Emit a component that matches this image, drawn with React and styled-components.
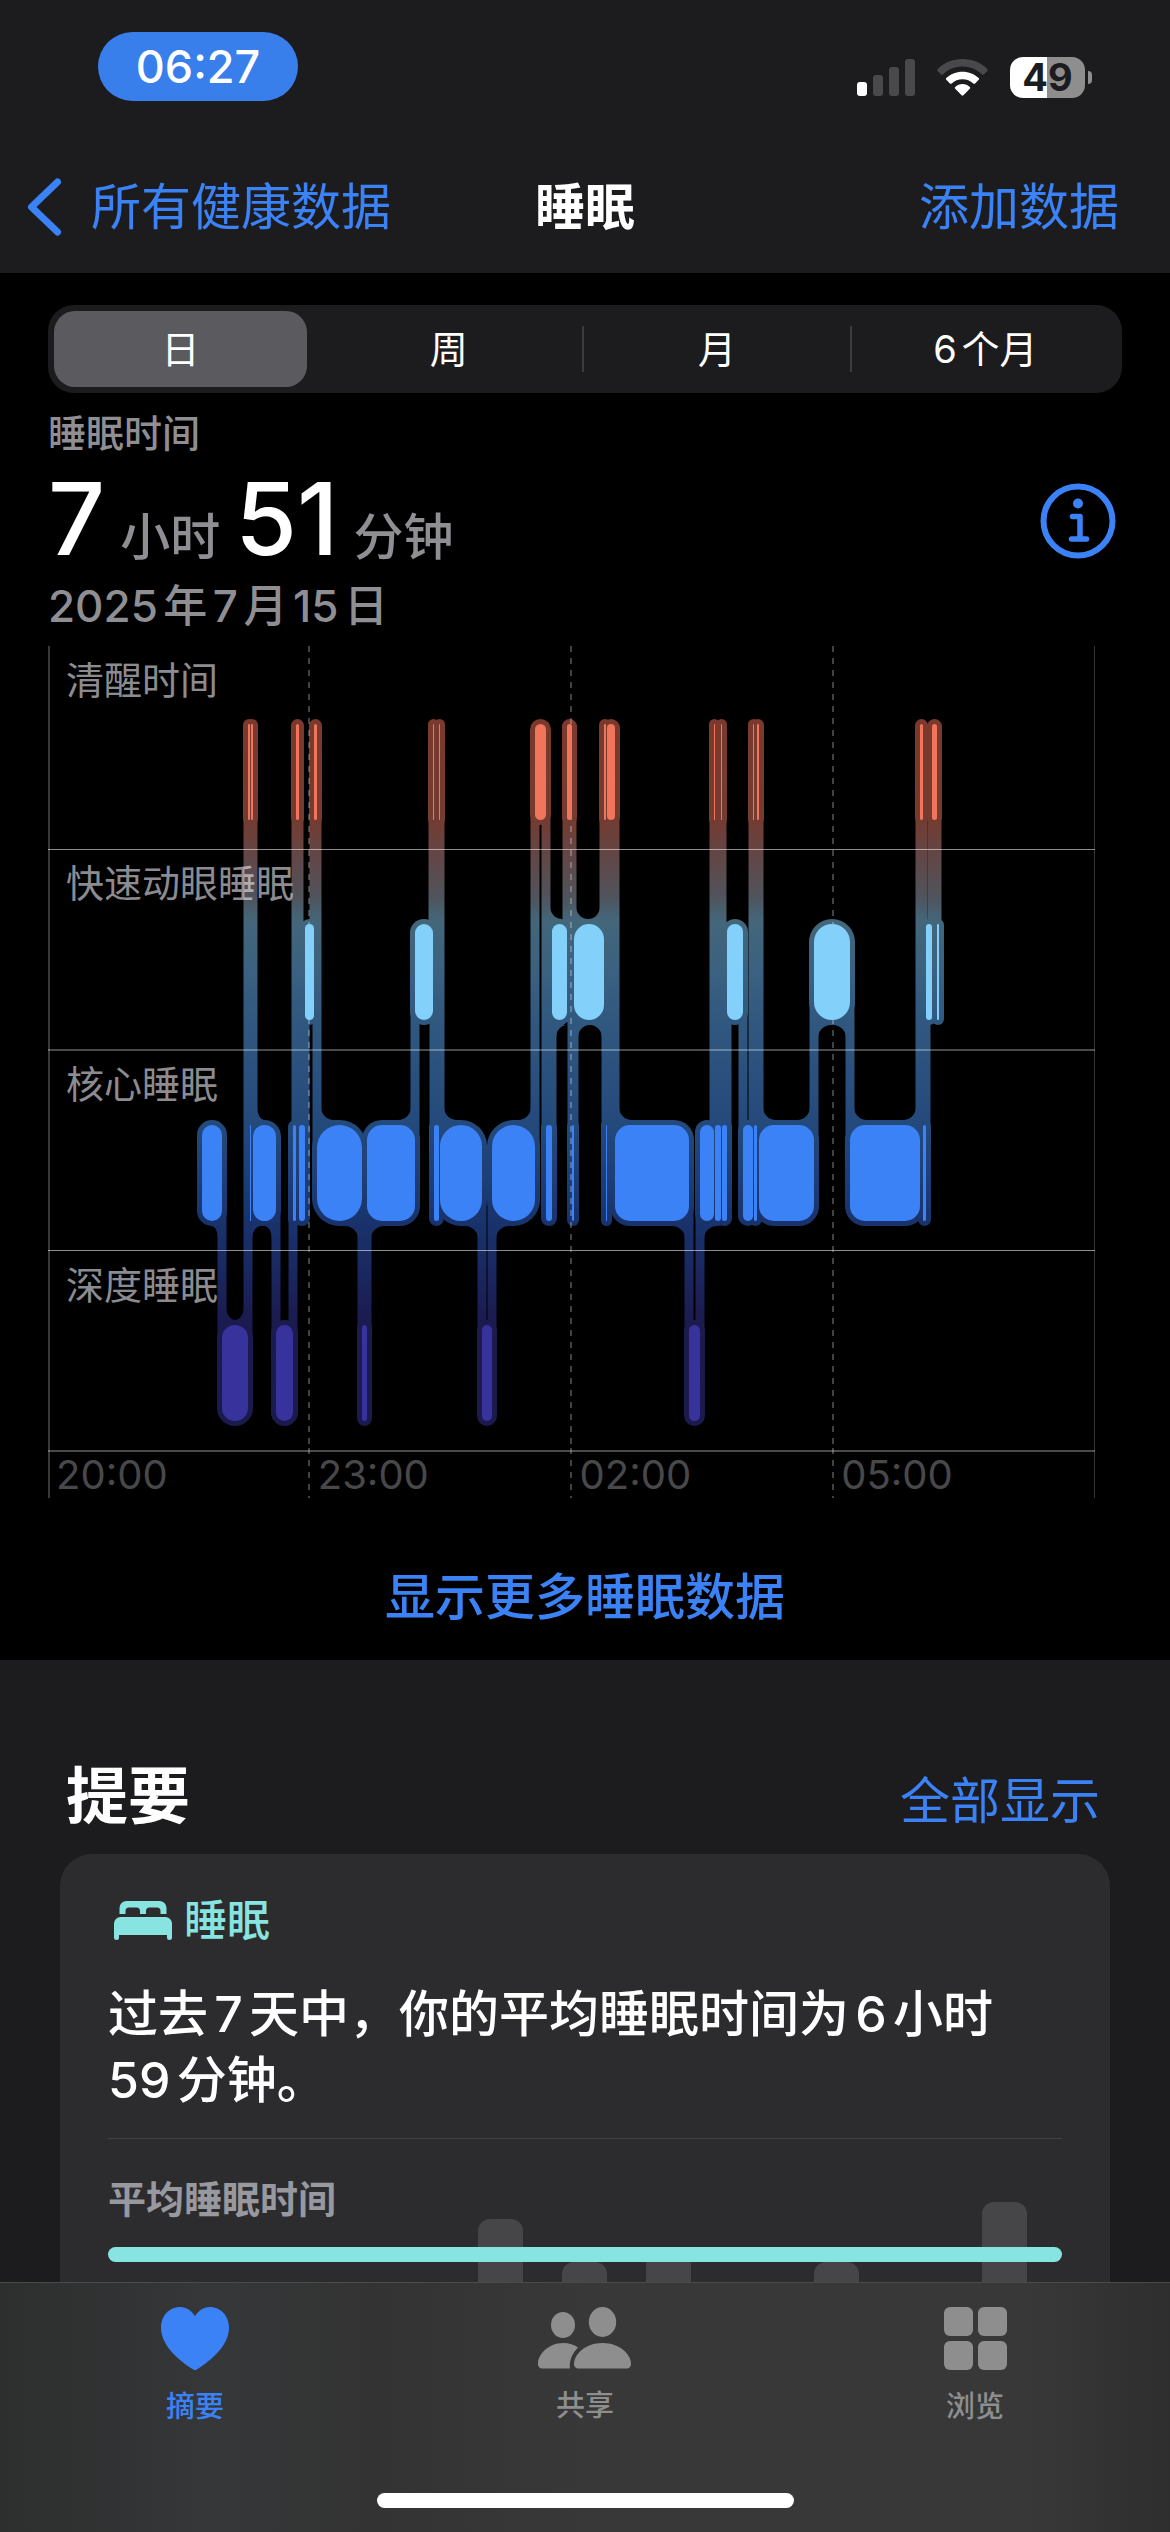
import React from "react";
import styled, { createGlobalStyle } from "styled-components";

const GlobalStyle = createGlobalStyle`
    * {
        box-sizing: border-box;
    }
    html,
    body {
        margin: 0;
        background-color: #1c1c1e;
    }
    body {
        font-family: Inter, "Noto Sans CJK SC", sans-serif;
        color: #fff;
        text-autospace: normal;
    }
    button {
        font-family: inherit;
        color: inherit;
        text-autospace: inherit;
        background: none;
        border: none;
        padding: 0;
        margin: 0;
    }
    h1,
    h2,
    p {
        margin: 0;
    }
    a {
        color: #3b82f6;
        text-decoration: none;
    }
    svg {
        display: block;
    }
`;

/* ---------- sleep data ---------- */

// top of every stage band, in chart units
const STAGE_TOP = { awake: 78, rem: 278, core: 479, deep: 679 };
const STAGE_COLOR = {
    awake: "#f0755a",
    rem: "#83d0fb",
    core: "#3b82f6",
    deep: "#38329c",
};
const BAR = 96;
const RIM = 5;
const START = 154;

// [stage, end of the stage], each one starts where the last one ended
const NIGHT = [
    ["core", 174],
    ["deep", 200],
    ["awake", 202],
    ["core", 203],
    ["awake", 205],
    ["core", 228],
    ["deep", 245],
    ["core", 248],
    ["awake", 251],
    ["core", 257],
    ["rem", 266],
    ["awake", 269],
    ["core", 314],
    ["deep", 319],
    ["core", 367],
    ["rem", 385],
    ["awake", 386],
    ["core", 391],
    ["awake", 392],
    ["core", 434],
    ["deep", 444],
    ["core", 487],
    ["awake", 498],
    ["core", 504],
    ["rem", 519],
    ["awake", 524],
    ["core", 526],
    ["rem", 556],
    ["awake", 558],
    ["core", 559],
    ["awake", 567],
    ["core", 641],
    ["deep", 652],
    ["core", 666],
    ["awake", 667],
    ["core", 673],
    ["awake", 674],
    ["core", 679],
    ["rem", 695],
    ["core", 705],
    ["awake", 706],
    ["core", 709],
    ["awake", 711],
    ["core", 766],
    ["rem", 802],
    ["core", 872],
    ["awake", 875],
    ["core", 878],
    ["rem", 884],
    ["awake", 889],
    ["rem", 891],
];

const segments = NIGHT.map(([stage, end], i) => {
    const start = i === 0 ? START : NIGHT[i - 1][1];
    const width = end - start;
    return {
        stage,
        start,
        end,
        width,
        y: STAGE_TOP[stage],
        radius: width < 46 ? width / 2 : 15,
    };
});

// concave corner between a vertical connector and a stage band,
// "patch" squares off the rounded rim of the band under it
const fillet = (x, y, dx, dy, rx, patch) =>
    `M${x} ${y}h${dx * rx}A${rx} 13 0 0 ${dx * dy < 0 ? 1 : 0} ${x} ${
        y + dy * 13
    }ZM${x} ${y}h${dx * patch}v${-dy * 30}h${-dx * patch}Z`;

const fillets = segments.flatMap((seg, i) => {
    if (seg.width < 20) return [];
    const rx = Math.min(13, (seg.width - 9) / 2 + 1);
    const patch = Math.max(rx, seg.radius - 3);
    const corner = (other, x, dx) => {
        if (!other) return [];
        const above = other.y < seg.y;
        const edge = above ? seg.y - RIM : seg.y + BAR + RIM;
        return [fillet(x, edge, dx, above ? -1 : 1, rx, patch)];
    };
    return [
        ...corner(segments[i - 1], seg.start + 4, 1),
        ...corner(segments[i + 1], seg.end - 4, -1),
    ];
});

// corners where a short stage sits next to a longer one
const extraFillets = [
    fillet(502, 273, 1, -1, 12, 12),
    fillet(528, 273, 1, -1, 12, 14),
    fillet(508, 379, 1, 1, 11, 8),
    fillet(554, 379, -1, 1, 12, 14),
    fillet(656, 580, 1, 1, 13, 13),
    fillet(204, 580, 1, 1, 9, 12),
];

const SleepChart = () => (
    <ChartSvg viewBox="0 0 1047 852" preserveAspectRatio="none" role="img">
        <defs>
            <linearGradient
                id="stages"
                gradientUnits="userSpaceOnUse"
                x1="0"
                y1="73"
                x2="0"
                y2="780"
            >
                <stop offset="0" stopColor="#7a392c" />
                <stop offset="0.14" stopColor="#743b30" />
                <stop offset="0.2" stopColor="#604849" />
                <stop offset="0.25" stopColor="#50535b" />
                <stop offset="0.285" stopColor="#43667a" />
                <stop offset="0.36" stopColor="#3a6180" />
                <stop offset="0.43" stopColor="#30587f" />
                <stop offset="0.57" stopColor="#244a7c" />
                <stop offset="0.65" stopColor="#1d3e76" />
                <stop offset="0.715" stopColor="#19326b" />
                <stop offset="0.79" stopColor="#1a265e" />
                <stop offset="0.85" stopColor="#1b1b4f" />
                <stop offset="1" stopColor="#1b1a4c" />
            </linearGradient>
        </defs>

        <g fill="url(#stages)">
            {segments.map((seg) => (
                <rect
                    key={seg.start}
                    x={seg.start - RIM}
                    y={seg.y - RIM}
                    width={seg.width + RIM * 2}
                    height={BAR + RIM * 2}
                    rx={seg.radius + RIM}
                />
            ))}
            {segments.slice(1).map((seg, i) => {
                const top = Math.min(seg.y, segments[i].y);
                const bottom = Math.max(seg.y, segments[i].y);
                return (
                    <rect
                        key={seg.start}
                        x={seg.start - 4.5}
                        y={top + 20}
                        width={9}
                        height={bottom - top + BAR - 40}
                    />
                );
            })}
            {[...fillets, ...extraFillets].map((d) => (
                <path key={d} d={d} />
            ))}
        </g>

        <g stroke="#fff">
            <path d="M0 203.5H1047M0 604.5H1047" strokeOpacity="0.55" />
            <path d="M0 404H1047M0 805H1047" strokeOpacity="0.29" strokeWidth="2" />
            <path d="M1 0V852" strokeOpacity="0.22" strokeWidth="2" />
            <path d="M1046.5 0V852" strokeOpacity="0.2" />
            <path
                d="M261 0V805M523 0V805M785 0V805M261 802V852M523 802V852M785 802V852"
                strokeOpacity="0.26"
                strokeWidth="2"
                strokeDasharray="6"
            />
        </g>

        {segments.map((seg) => (
            <rect
                key={seg.start}
                x={seg.start}
                y={seg.y}
                width={seg.width}
                height={BAR}
                rx={seg.radius}
                fill={STAGE_COLOR[seg.stage]}
            />
        ))}
    </ChartSvg>
);

/* ---------- icons ---------- */

const SignalIcon = () => (
    <svg width="58" height="37" viewBox="0 0 58 37">
        <rect y="23" width="10" height="14" rx="3" fill="#fff" />
        <g fill="#49494b">
            <rect x="16" y="16" width="10" height="21" rx="3" />
            <rect x="32" y="8" width="10" height="29" rx="3" />
            <rect x="48" width="10" height="37" rx="3" />
        </g>
    </svg>
);

const WifiIcon = () => (
    <svg width="51" height="37" viewBox="0 0 51 37">
        <path
            d="M.6 10.2C7 3.6 15.8 0 25.5 0S44 3.6 50.4 10.2c.6.6.6 1.2 0 1.8l-3.5 3.5c-.6.6-1.2.6-1.8 0C40 10.5 33 7.6 25.5 7.6S11 10.5 5.9 15.5c-.6.6-1.2.6-1.8 0L.6 12c-.6-.6-.6-1.2 0-1.8z"
            fill="#49494b"
        />
        <path
            d="M9.3 19C13.5 15 19.2 12.7 25.5 12.7S37.5 15 41.7 19c.6.6.6 1.2 0 1.8l-3.6 3.6c-.6.6-1.2.6-1.8 0-2.8-2.6-6.6-4.2-10.8-4.2s-8 1.6-10.8 4.2c-.6.6-1.2.6-1.8 0l-3.6-3.6c-.6-.6-.6-1.2 0-1.8z"
            fill="#fff"
        />
        <path
            d="M18.2 28c1.9-1.8 4.5-2.9 7.3-2.9s5.4 1.1 7.3 2.9c.6.6.6 1.2 0 1.8l-6.4 6.4c-.6.6-1.2.6-1.8 0l-6.4-6.4c-.6-.6-.6-1.2 0-1.8z"
            fill="#fff"
        />
    </svg>
);

const ChevronIcon = () => (
    <svg width="35" height="58" viewBox="0 0 35 58" fill="none">
        <path
            d="M30.5 4L4.5 29l26 25"
            stroke="#3b82f6"
            strokeWidth="7"
            strokeLinecap="round"
            strokeLinejoin="round"
        />
    </svg>
);

const InfoIcon = () => (
    <svg width="76" height="76" viewBox="0 0 76 76" fill="#3b82f6">
        <circle
            cx="38"
            cy="38"
            r="34.5"
            fill="none"
            stroke="#3b82f6"
            strokeWidth="6"
        />
        <circle cx="38" cy="20.5" r="5" />
        <path
            d="M32.5 33.5h7.5v22M31.5 56h15"
            fill="none"
            stroke="#3b82f6"
            strokeWidth="5.5"
            strokeLinecap="round"
            strokeLinejoin="round"
        />
    </svg>
);

const BedIcon = () => (
    <svg width="58" height="39" viewBox="0 0 58 39" fill="#87e4e1">
        <path d="M5.5 13V7a7 7 0 0 1 7-7h33a7 7 0 0 1 7 7v6h-6V10a3.5 3.5 0 0 0-3.5-3.5H35.5A3.5 3.5 0 0 0 32 10v3h-6v-3a3.5 3.5 0 0 0-3.5-3.5H15A3.5 3.5 0 0 0 11.5 10v3z" />
        <path d="M0 22.5a6.5 6.5 0 0 1 6.5-6.5h45a6.5 6.5 0 0 1 6.5 6.5v14a2.5 2.5 0 0 1-5 0V34H5v2.5a2.5 2.5 0 0 1-5 0z" />
    </svg>
);

const HeartIcon = () => (
    <svg width="68" height="63" viewBox="0 0 68 63" fill="currentColor">
        <path d="M34 63c-1 0-2.2-.7-3.4-1.5C12.5 49.8 0 35.5 0 20.8 0 8.8 8.3 0 19 0c6.6 0 11.9 3.7 15 9.3C37.2 3.7 42.4 0 49 0c10.7 0 19 8.8 19 20.8 0 14.7-12.5 29-30.6 40.7C36.2 62.3 35 63 34 63z" />
    </svg>
);

const PeopleIcon = () => (
    <svg width="94" height="62" viewBox="0 0 94 62" fill="currentColor">
        <ellipse cx="25" cy="18" rx="12" ry="13" />
        <ellipse cx="64.5" cy="15" rx="13.7" ry="15" />
        <path d="M40 40.5C34.5 46 31 53.5 32 61.5H5C1.5 61.5 0 59.5 0 57 0 47.5 10 36 25.5 36c5.5 0 10.5 1.5 14.5 4.5z" />
        <path d="M36 57C36 47.5 47 36 64.5 36S93 47.5 93 57c0 2.5-1.5 4.5-5 4.5H41c-3.5 0-5-2-5-4.5z" />
    </svg>
);

const GridIcon = () => (
    <svg width="63" height="63" viewBox="0 0 63 63" fill="currentColor">
        <rect width="29" height="29" rx="6" />
        <rect x="34" width="29" height="29" rx="6" />
        <rect y="34" width="29" height="29" rx="6" />
        <rect x="34" y="34" width="29" height="29" rx="6" />
    </svg>
);

/* ---------- page ---------- */

const RANGES = ["日", "周", "月", "6个月"];
const STAGE_LABELS = ["清醒时间", "快速动眼睡眠", "核心睡眠", "深度睡眠"];
const HOURS = ["20:00", "23:00", "02:00", "05:00"];
const WEEK = [283, 240, 248, 0, 240, 0, 300];
const TABS = [
    { label: "摘要", Icon: HeartIcon, active: true },
    { label: "共享", Icon: PeopleIcon },
    { label: "浏览", Icon: GridIcon },
];

const App = () => {
    return (
        <Screen>
            <GlobalStyle />
            <Header>
                <StatusBar>
                    <TimePill>06:27</TimePill>
                    <StatusIcons>
                        <SignalIcon />
                        <WifiIcon />
                        <Battery>
                            <span className="level">49</span>
                            <span className="cap"></span>
                        </Battery>
                    </StatusIcons>
                </StatusBar>
                <NavBar>
                    <NavLink href="#all">
                        <ChevronIcon />
                        所有健康数据
                    </NavLink>
                    <h1>睡眠</h1>
                    <NavLink href="#add" $end>
                        添加数据
                    </NavLink>
                </NavBar>
            </Header>

            <Content>
                <DaySection>
                    <Segmented>
                        {RANGES.map((range, i) => (
                            <Segment key={range} type="button" $active={i === 0}>
                                {range}
                            </Segment>
                        ))}
                    </Segmented>

                    <Caption>睡眠时间</Caption>
                    <Headline>
                        <Duration>
                            <strong>7</strong>
                            <span>小时</span>
                            <strong>51</strong>
                            <span>分钟</span>
                        </Duration>
                        <button type="button" aria-label="信息">
                            <InfoIcon />
                        </button>
                    </Headline>
                    <DateLine>2025年7月15日</DateLine>

                    <Chart>
                        <SleepChart />
                        <StageRows>
                            {STAGE_LABELS.map((label) => (
                                <span key={label}>{label}</span>
                            ))}
                        </StageRows>
                        <HourAxis>
                            {HOURS.map((hour) => (
                                <span key={hour}>{hour}</span>
                            ))}
                        </HourAxis>
                    </Chart>

                    <MoreLink href="#more">显示更多睡眠数据</MoreLink>
                </DaySection>

                <Highlights>
                    <SectionHead>
                        <h2>提要</h2>
                        <a href="#highlights">全部显示</a>
                    </SectionHead>
                    <Card>
                        <CardTitle>
                            <BedIcon />
                            睡眠
                        </CardTitle>
                        <CardText>
                            过去7天中，你的平均睡眠时间为6小时
                            <br />
                            59分钟。
                        </CardText>
                        <AverageLabel>平均睡眠时间</AverageLabel>
                        <WeekBars>
                            {WEEK.map((height, i) => (
                                <span key={i} style={{ height }}></span>
                            ))}
                        </WeekBars>
                    </Card>
                </Highlights>
            </Content>

            <TabBar>
                <Tabs>
                    {TABS.map(({ label, Icon, active }) => (
                        <Tab key={label} type="button" $active={active}>
                            <Icon />
                            {label}
                        </Tab>
                    ))}
                </Tabs>
                <HomeIndicator />
            </TabBar>
        </Screen>
    );
};

export default App;

const Screen = styled.div`
    display: flex;
    flex-direction: column;
    height: 100vh;
    background-color: #1c1c1e;
`;

const Header = styled.header`
    flex: none;
    background-color: #1c1c1e;
`;

const StatusBar = styled.div`
    display: flex;
    justify-content: space-between;
    padding: 32px 78px 0 98px;
    height: 141px;
`;

const TimePill = styled.div`
    display: flex;
    align-items: center;
    justify-content: center;
    width: 200px;
    height: 69px;
    border-radius: 35px;
    background-color: #397fec;
    font-size: 45px;
    font-weight: 500;
`;

const StatusIcons = styled.div`
    display: flex;
    align-items: center;
    gap: 22px;
    height: 41px;
    margin-top: 25px;
`;

const Battery = styled.div`
    display: flex;
    align-items: center;
    gap: 3px;
    .level {
        width: 75px;
        height: 41px;
        border-radius: 13px;
        background: linear-gradient(90deg, #fff 49%, #8e8e8f 49%);
        color: #1c1c1e;
        font-size: 38px;
        font-weight: 700;
        line-height: 41px;
        text-align: center;
    }
    .cap {
        width: 4px;
        height: 13px;
        border-radius: 0 4px 4px 0;
        background-color: #8e8e8f;
    }
`;

const NavBar = styled.nav`
    display: grid;
    grid-template-columns: 1fr auto 1fr;
    align-items: center;
    height: 132px;
    h1 {
        font-size: 50px;
        font-weight: 700;
        line-height: 60px;
    }
`;

const NavLink = styled.a`
    display: flex;
    align-items: center;
    justify-content: ${(props) => (props.$end ? "flex-end" : "flex-start")};
    gap: 29px;
    padding: 0 51px 0 27px;
    font-size: 50px;
    line-height: 60px;
`;

const Content = styled.main`
    flex: 1;
    min-height: 0;
    overflow-y: auto;
    scrollbar-width: none;
`;

const DaySection = styled.section`
    padding: 32px 48px 33px;
    background-color: #000;
`;

const Segmented = styled.div`
    display: grid;
    grid-template-columns: repeat(4, 1fr);
    gap: 15px;
    height: 88px;
    padding: 6px 10px 6px 6px;
    border-radius: 26px;
    background-color: #1c1c1e;
`;

const Segment = styled.button`
    position: relative;
    border-radius: 21px;
    background-color: ${(props) => (props.$active ? "#5b5a5f" : "transparent")};
    font-size: 38px;
    line-height: 76px;
    &:nth-child(n + 3)::before {
        content: "";
        position: absolute;
        left: -9px;
        top: 15px;
        width: 2px;
        height: 46px;
        background-color: #3c3c3f;
    }
`;

const Caption = styled.p`
    margin-top: 18px;
    color: #8e8e93;
    font-size: 38px;
    font-weight: 500;
    line-height: 44px;
`;

const Headline = styled.div`
    display: flex;
    align-items: center;
    justify-content: space-between;
    height: 126px;
    padding: 6px 6px 0 0;
`;

const Duration = styled.div`
    display: flex;
    align-items: baseline;
    gap: 15px;
    padding-top: 14px;
    line-height: 100px;
    strong {
        font-size: 100px;
        font-weight: 500;
    }
    span {
        color: #8e8e93;
        font-size: 50px;
        font-weight: 500;
    }
`;

const DateLine = styled.p`
    color: #8e8e93;
    font-size: 44px;
    font-weight: 500;
    line-height: 50px;
`;

const Chart = styled.div`
    position: relative;
    height: 852px;
    margin: 15px 27px 0 0;
`;

const ChartSvg = styled.svg`
    position: absolute;
    inset: 0;
    width: 100%;
    height: 100%;
`;

const StageRows = styled.div`
    position: relative;
    display: grid;
    grid-template-rows: 203px repeat(3, 201px);
    padding-left: 18px;
    span {
        padding-top: 12px;
        color: rgba(235, 235, 245, 0.6);
        font-size: 38px;
        line-height: 44px;
    }
`;

const HourAxis = styled.div`
    position: relative;
    display: grid;
    grid-template-columns: repeat(4, 1fr);
    height: 46px;
    span {
        padding-left: 8px;
        color: #48484a;
        font-size: 40px;
        line-height: 46px;
    }
`;

const MoreLink = styled.a`
    display: block;
    margin-top: 69px;
    font-size: 50px;
    font-weight: 500;
    line-height: 60px;
    text-align: center;
`;

const Highlights = styled.section`
    padding: 92px 60px 0;
`;

const SectionHead = styled.div`
    display: flex;
    align-items: baseline;
    justify-content: space-between;
    padding: 0 10px 0 6px;
    line-height: 90px;
    h2 {
        font-size: 62px;
        font-weight: 700;
    }
    a {
        font-size: 50px;
    }
`;

const Card = styled.article`
    margin-top: 8px;
    padding: 36px 48px 0;
    border-radius: 32px;
    background-color: #2c2c2e;
`;

const CardTitle = styled.div`
    display: flex;
    align-items: center;
    gap: 12px;
    padding-left: 6px;
    color: #87e4e1;
    font-size: 43px;
    font-weight: 500;
    line-height: 60px;
`;

const CardText = styled.p`
    padding: 31px 0 25px;
    border-bottom: 1px solid #434345;
    font-size: 50px;
    font-weight: 500;
    line-height: 66px;
`;

const AverageLabel = styled.p`
    margin-top: 37px;
    color: #98989f;
    font-size: 38px;
    font-weight: 600;
    line-height: 46px;
`;

// the tallest bars reach up beside the label
const WeekBars = styled.div`
    position: relative;
    display: flex;
    align-items: flex-end;
    justify-content: flex-end;
    gap: 39px;
    height: 300px;
    margin-top: -20px;
    padding-right: 35px;
    &::after {
        content: "";
        position: absolute;
        left: 0;
        right: 0;
        top: 45px;
        height: 15px;
        border-radius: 8px;
        background-color: #87e4e1;
    }
    span {
        width: 45px;
        border-radius: 12px;
        background-color: #464648;
    }
`;

const TabBar = styled.footer`
    flex: none;
    display: flex;
    flex-direction: column;
    align-items: center;
    justify-content: space-between;
    height: 250px;
    padding: 24px 0;
    border-top: 1px solid #4b4b4d;
    background: linear-gradient(
        90deg,
        #2d2e2e,
        #353738 18%,
        #333 32%,
        #383838 50%,
        #383838 88%,
        #2e2e2e
    );
`;

const Tabs = styled.div`
    display: grid;
    grid-template-columns: repeat(3, 1fr);
    width: 100%;
`;

const Tab = styled.button`
    display: flex;
    flex-direction: column;
    align-items: center;
    gap: 18px;
    color: ${(props) => (props.$active ? "#3b82f6" : "#8e8e8e")};
    font-size: 29px;
    font-weight: 500;
    line-height: 38px;
`;

const HomeIndicator = styled.div`
    width: 417px;
    height: 15px;
    border-radius: 8px;
    background-color: #fff;
`;
